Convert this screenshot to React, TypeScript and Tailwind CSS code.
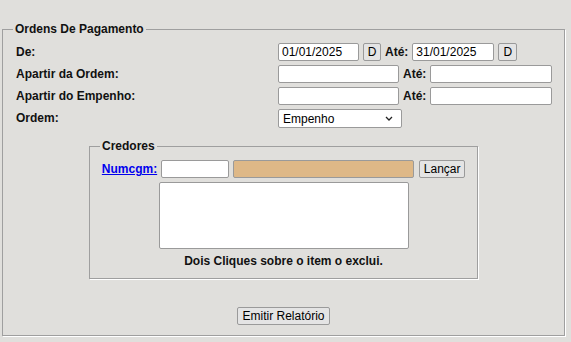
import React from "react";

const fieldCls =
  "h-[18px] border border-[#9a9a9a] rounded-[2px] px-[3px] text-[12px] font-normal text-black outline-none";
const inputCls = `${fieldCls} bg-white`;
const btnCls =
  "bg-[#e4e4e4] border border-[#9a9a9a] rounded-[2px] text-[12px] font-normal text-black leading-none";

const App = () => {
  return (
    <div className="min-h-[342px] bg-[#e0dfdc] pt-[22px] pl-[2px] font-['Liberation_Sans',Arial,sans-serif] text-[12px] text-[#111]">
      <fieldset className="w-[563px] border border-[#9f9f9f] shadow-[1px_1px_0_#fff] px-[10px] pb-[10px]">
        <legend className="px-[2px] font-bold leading-[14px]">Ordens De Pagamento</legend>

        <div className="pl-[3px] pt-[5px] grid grid-cols-[262px_1fr] auto-rows-[22px] items-center font-bold">
          <span>De:</span>
          <div className="flex items-center gap-1">
            <input className={`${inputCls} w-[81px]`} defaultValue="01/01/2025" />
            <button className={`${btnCls} h-[18px] w-[18px]`}>D</button>
            <span>Até:</span>
            <input className={`${inputCls} w-[82px]`} defaultValue="31/01/2025" />
            <button className={`${btnCls} h-[18px] w-[19px]`}>D</button>
          </div>

          <span>Apartir da Ordem:</span>
          <div className="flex items-center gap-1">
            <input className={`${inputCls} w-[121px]`} />
            <span>Até:</span>
            <input className={`${inputCls} w-[122px]`} />
          </div>

          <span>Apartir do Empenho:</span>
          <div className="flex items-center gap-1">
            <input className={`${inputCls} w-[121px]`} />
            <span>Até:</span>
            <input className={`${inputCls} w-[122px]`} />
          </div>

          <span>Ordem:</span>
          <div className="flex items-center">
            <div className="relative w-[124px] h-[19px]">
              <select className="appearance-none w-full h-full bg-white border border-[#9a9a9a] rounded-[2px] pl-[4px] text-[12px] font-normal text-black outline-none">
                <option>Empenho</option>
              </select>
              <svg
                className="absolute right-[9px] top-[7px] pointer-events-none"
                width="8"
                height="5"
                viewBox="0 0 8 5"
                fill="none"
                stroke="#222"
                strokeWidth="1.3"
              >
                <path d="M1 1l3 3 3-3" />
              </svg>
            </div>
          </div>
        </div>

        <fieldset className="mx-auto mt-[10px] w-[389px] border border-[#9f9f9f] shadow-[1px_1px_0_#fff] px-[10px] pb-[10px]">
          <legend className="px-[2px] font-bold leading-[14px]">Credores</legend>
          <div className="pt-[7px] flex justify-center items-center gap-1">
            <a href="#" className="font-bold text-[#0000ee] underline">
              Numcgm:
            </a>
            <input className={`${inputCls} w-[68px]`} />
            <input className={`${fieldCls} w-[181px] bg-[#deb887]`} readOnly />
            <button className={`${btnCls} h-[18px] w-[46px] ml-[1px]`}>Lançar</button>
          </div>
          <textarea className="block mx-auto mt-[4px] w-[250px] h-[67px] bg-white border border-[#9a9a9a] rounded-[2px] resize-none outline-none" />
          <p className="mt-[5px] text-center font-bold leading-[14px]">Dois Cliques sobre o item o exclui.</p>
        </fieldset>

        <div className="mt-[28px] flex justify-center">
          <button className={`${btnCls} h-[18px] px-[4px]`}>Emitir Relatório</button>
        </div>
      </fieldset>
    </div>
  );
};

export default App;
